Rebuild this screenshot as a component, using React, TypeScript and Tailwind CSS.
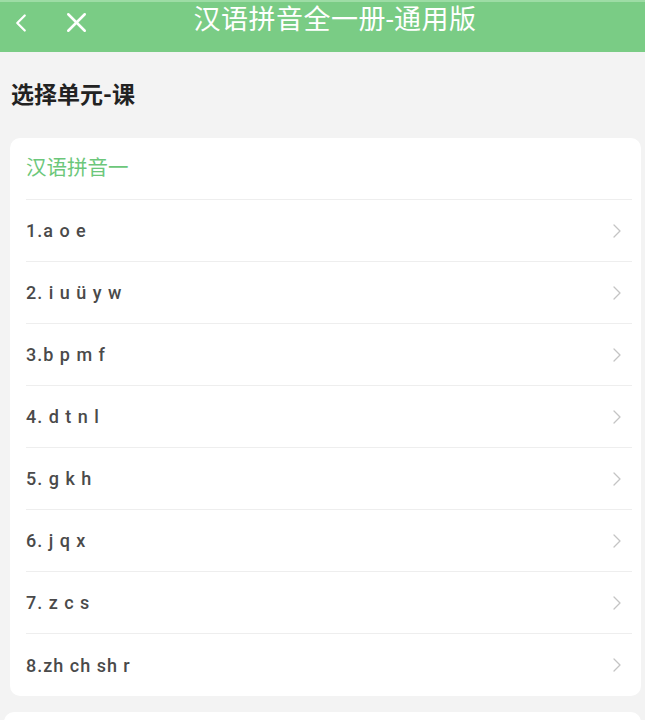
import { ChevronLeft, ChevronRight, X } from 'lucide-react'

const lessons = [
  '1.a o e',
  '2. i u ü y w',
  '3.b p m f',
  '4. d t n l',
  '5. g k h',
  '6. j q x',
  '7. z c s',
  '8.zh ch sh r',
]

export default function App() {
  return (
    <div
      className="w-[645px] h-[720px] overflow-hidden bg-[#f3f3f3]"
      style={{ fontFamily: 'Roboto, "Noto Sans CJK SC", sans-serif' }}
    >
      {/* Top bar */}
      <div className="h-[52px] bg-[#7acc85] border-t-2 border-[#9ddca5] relative">
        <div className="flex items-center pl-[6px] pt-[4px] gap-[24px] text-white">
          <ChevronLeft size={30} strokeWidth={1.8} />
          <X size={33} strokeWidth={1.8} />
        </div>
        <div className="absolute left-0 right-0 top-0 h-[36px] flex items-center justify-center pl-[25px] text-white text-[27px] tracking-[0.5px]">
          汉语拼音全一册-通用版
        </div>
      </div>

      <div className="pl-[11px] pt-[29px] pb-[27px] text-[23px] font-bold text-[#222] leading-[30px]">
        选择单元-课
      </div>

      <div className="ml-[10px] mr-[4px] bg-white rounded-[10px]">
        <div className="h-[61px] flex items-center px-[16px] text-[20.5px] text-[#6cc77a]">
          汉语拼音一
        </div>
        {lessons.map((item, i) => (
          <div key={item} className="ml-[16px] mr-[9px] border-t border-[#eeeeee]">
            <div className={`flex items-center justify-between ${i === lessons.length - 1 ? 'h-[62px]' : 'h-[61px]'}`}>
              <span className="text-[18px] font-medium text-[#4a4a4a] tracking-[1px]">{item}</span>
              <ChevronRight size={24} strokeWidth={1.3} className="text-[#c4c4c4] mr-[3px]" />
            </div>
          </div>
        ))}
      </div>

      <div className="ml-[4px] mr-[4px] mt-[16px] h-[40px] bg-white rounded-[10px]" />
    </div>
  )
}
